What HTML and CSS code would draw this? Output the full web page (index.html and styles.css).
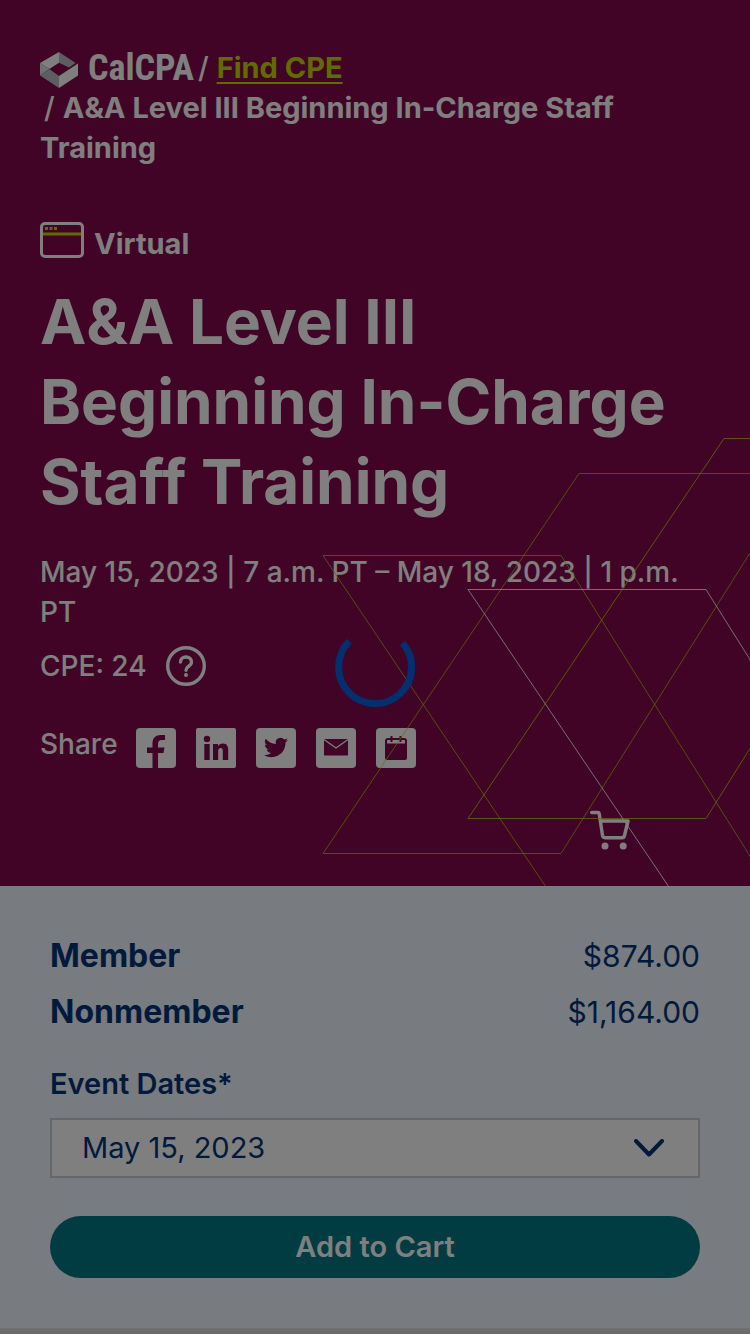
FILE: index.html
```html
<!DOCTYPE html>
<html lang="en">
<head>
<meta charset="utf-8">
<meta name="viewport" content="width=device-width, initial-scale=1">
<title>A&amp;A Level III Beginning In-Charge Staff Training | CalCPA</title>
<link rel="stylesheet" href="styles.css">
</head>
<body>
<main class="page">
  <header class="hero">
    <nav class="breadcrumb" aria-label="Breadcrumb">
      <div class="crumb-line">
        <a class="logo" href="#" aria-label="CalCPA home">
          <svg class="logo-mark" viewBox="0 0 38 36" aria-hidden="true">
            <path fill="#fff" d="M19 0v10.700L9.300 17 0 11z"/>
            <path fill="#b8bcc2" d="M19 0 35.500 11 29 15.500l-10-4.800z"/>
            <path fill="#e0e1e4" d="M0 11l9.300 6L0 23.500z"/>
            <path fill="#b8bcc2" d="M0 23.500 9.300 17 19 24v12z"/>
            <path fill="#fff" d="M38 11.500v12L19 36V24z"/>
          </svg>
          <span class="logo-name">CalCPA</span>
        </a>
        <span class="slash">/</span>
        <a class="crumb-link" href="#">Find CPE</a>
      </div>
      <div class="crumb-current"><span class="slash">/</span>A&amp;A Level III Beginning In-Charge Staff Training</div>
    </nav>

    <div class="format">
      <svg class="format-icon" viewBox="0 0 44 36" fill="none" aria-hidden="true">
        <path stroke="#c4d600" stroke-width="3" d="M2 12h40"/>
        <rect x="1.500" y="1.500" width="41" height="33" rx="3.500" stroke="#fff" stroke-width="3"/>
        <path fill="#c4d600" d="M5 5h3v3H5zM9.500 5h3v3h-3zM14 5h3v3h-3z"/>
      </svg>
      <span>Virtual</span>
    </div>

    <h1 class="title">A&amp;A Level III Beginning In-Charge Staff Training</h1>
    <p class="when">May 15, 2023 | 7 a.m. PT – May 18, 2023 | 1 p.m. PT</p>
    <div class="credits">
      <span>CPE: 24</span>
      <button class="icon-button" type="button" aria-label="About CPE credits">
        <svg viewBox="0 0 40 40" fill="none" stroke="#fff" stroke-width="3.400" aria-hidden="true">
          <circle cx="20" cy="20" r="18.300"/>
          <path stroke-linecap="round" d="M14.500 16c0-3.400 2.300-5 5.500-5s5.500 2 5.500 5c0 4.500-5.500 4-5.500 8.200"/>
          <circle cx="20" cy="29" r="2" fill="#fff" stroke="none"/>
        </svg>
      </button>
    </div>

    <div class="share">
      <span class="share-label">Share</span>
      <a class="share-link" href="#" aria-label="Facebook">
        <svg viewBox="0 0 40 40" aria-hidden="true"><rect width="40" height="40" rx="4" fill="#fff"/><path fill="#82084e" d="M16.500 40V25H11v-5.500h5.500v-4C16.500 10 19.500 7 25 7h4v5h-3c-3 0-4 1.500-4 4v3.500h6.500L27.500 25H22v15z"/></svg>
      </a>
      <a class="share-link" href="#" aria-label="LinkedIn">
        <svg viewBox="0 0 40 40" aria-hidden="true"><rect width="40" height="40" rx="2" fill="#fff"/><g fill="#82084e"><circle cx="11" cy="11" r="3.200"/><path d="M8.300 16h5.400v16H8.300zM17 16h5v2.200c1-1.700 2.700-2.600 4.800-2.600 4.200 0 5.400 2.800 5.400 7V32h-5.400v-8.500c0-2-.5-3.400-2.200-3.400-1.800 0-2.400 1.400-2.400 3.400V32H17z"/></g></svg>
      </a>
      <a class="share-link" href="#" aria-label="Twitter">
        <svg viewBox="0 0 40 40" aria-hidden="true"><rect width="40" height="40" rx="4" fill="#fff"/><path fill="#82084e" transform="translate(8 7.500)" d="M24 4.600c-.9.400-1.800.7-2.800.8 1-.6 1.800-1.600 2.200-2.700-1 .6-2 1-3.100 1.200A4.900 4.900 0 0 0 11.900 8.400C7.800 8.200 4.100 6.200 1.700 3.200a4.900 4.900 0 0 0 1.500 6.500c-.8 0-1.600-.2-2.200-.6v.1c0 2.300 1.700 4.300 3.900 4.800-.7.200-1.500.2-2.200.1.600 2 2.400 3.400 4.600 3.400A9.900 9.900 0 0 1 0 19.500 13.900 13.900 0 0 0 7.500 21.700c9.100 0 14.300-7.700 14-14.600 1-.7 1.800-1.600 2.500-2.500z"/></svg>
      </a>
      <a class="share-link" href="#" aria-label="Email">
        <svg viewBox="0 0 40 40" fill="none" aria-hidden="true"><rect width="40" height="40" rx="4" fill="#fff"/><path fill="#82084e" d="M8 11h24v16.500H8z"/><path stroke="#fff" stroke-width="1.200" d="m8 11.500 12 8.500 12-8.500"/></svg>
      </a>
      <a class="share-link" href="#" aria-label="Add to calendar">
        <svg viewBox="0 0 40 40" fill="none" aria-hidden="true"><rect width="40" height="40" rx="4" fill="#fff"/><path fill="#82084e" d="M9 15.500h22V30a2 2 0 0 1-2 2H11a2 2 0 0 1-2-2z"/><path stroke="#82084e" stroke-width="2" d="M10 16v-3a2 2 0 0 1 2-2h1m5 0h4m5 0h1a2 2 0 0 1 2 2v3M15.500 8v6M24.500 8v6M13 11h5m4 0h5"/></svg>
      </a>
    </div>

    <div class="cart-row">
      <button class="icon-button" type="button" aria-label="Shopping cart">
        <svg viewBox="0 0 40 40" fill="none" stroke="#fff" stroke-width="3.400" stroke-linejoin="round" stroke-linecap="round" aria-hidden="true">
          <path d="M1.700 2.500H8q1 0 1.200 1l3.300 22q.4 2.200 2.500 2.200h17q2 0 2.500-2.200l3.500-14.500H10.500"/>
          <g fill="#fff" stroke="none"><circle cx="15" cy="36" r="3.500"/><circle cx="33.200" cy="36" r="3.500"/></g>
        </svg>
      </button>
    </div>

    <svg class="hero-lines" viewBox="322 438 428 448" fill="none" stroke="#c4d600" aria-hidden="true">
      <path stroke-opacity=".8" d="M760 438.500H724L468 818.500H706L760 732.500"/>
      <path stroke-opacity=".7" d="M760 473.500H579L323 853.500H561L760 537M546 887 323 555.500H561L760 872"/>
      <path stroke="#fff" stroke-opacity=".85" d="M669 887 468 589.500H706L760 675.500"/>
    </svg>
  </header>

  <section class="purchase" aria-label="Pricing">
    <dl class="prices">
      <div class="price"><dt>Member</dt><dd>$874.00</dd></div>
      <div class="price"><dt>Nonmember</dt><dd>$1,164.00</dd></div>
    </dl>
    <form class="order">
      <label class="order-label" for="event-date">Event Dates*</label>
      <div class="select-box">
        <select id="event-date" class="select"><option>May 15, 2023</option></select>
        <svg class="chevron" viewBox="0 0 30 18" fill="none" stroke="#003478" stroke-width="4" stroke-linecap="round" stroke-linejoin="round" aria-hidden="true"><path d="m2 2 13 13.500L28 2"/></svg>
      </div>
      <button class="submit" type="button">Add to Cart</button>
    </form>
  </section>
  <div class="next-section"></div>
</main>

<div class="overlay" role="status" aria-label="Loading">
  <svg class="spinner" viewBox="0 0 80 80" fill="none" stroke="#003070" stroke-width="7" aria-hidden="true"><path d="M14.300 14.300A36.500 36.500 0 1 0 67.500 16"/></svg>
</div>
</body>
</html>
```
FILE: styles.css
```css
*, *::before, *::after { box-sizing: border-box; }

body {
  margin: 0;
  font-family: Inter, "Liberation Sans", sans-serif;
  font-size: 29px;
  line-height: 40px;
  color: #003478;
}

a { color: inherit; }

button { font: inherit; cursor: pointer; }

.page {
  min-height: 100vh;
  display: flex;
  flex-direction: column;
}

.hero {
  position: relative;
  padding: 48px 40px 36px;
  background: #82084e;
  color: #fff;
}

.breadcrumb { font-weight: 700; }

.crumb-line {
  display: flex;
  align-items: center;
}

.logo {
  display: flex;
  align-items: center;
  gap: 10px;
  text-decoration: none;
}

.logo-mark {
  width: 38px;
  height: 36px;
  margin-top: 4px;
}

.logo-name {
  font-family: "Roboto Condensed", Roboto, "Liberation Sans", sans-serif;
  font-size: 36px;
}

.slash { padding: 0 8px 0 4px; font-weight: 500; }

.crumb-link {
  color: #c4d600;
  text-underline-offset: 4px;
}

.format {
  display: flex;
  align-items: flex-start;
  gap: 10px;
  margin-top: 54px;
  font-weight: 700;
  line-height: 44px;
}

.format-icon { width: 44px; height: 36px; }

.title {
  margin: 16px 0 30px;
  font-size: 62px;
  line-height: 80px;
  font-weight: 700;
}

.when,
.credits,
.share {
  font-size: 28px;
  font-weight: 500;
}

.when { margin: 0; }

.credits {
  display: flex;
  align-items: center;
  gap: 19px;
  margin-top: 14px;
}

.icon-button {
  width: 40px;
  height: 40px;
  padding: 0;
  border: 0;
  background: none;
}

.icon-button svg,
.share-link svg { display: block; width: 100%; height: 100%; }

.share {
  display: flex;
  align-items: flex-start;
  gap: 20px;
  margin-top: 42px;
  line-height: 32px;
}

.share-label { margin-right: -2px; }

.share-link { width: 40px; height: 40px; }

.cart-row {
  display: flex;
  justify-content: flex-end;
  margin-top: 42px;
  padding-right: 80px;
}

.hero-lines {
  position: absolute;
  right: 0;
  bottom: 0;
  width: 428px;
  height: 448px;
  pointer-events: none;
}

.purchase {
  flex: 1;
  padding: 42px 50px 50px;
  background: #f0f6fe;
}

.prices { margin: 0; }

.price {
  display: flex;
  justify-content: space-between;
  padding: 8px 0;
}

.price dt { font-size: 32px; font-weight: 700; }
.price dd { margin: 0; font-size: 30px; }

.order {
  display: flex;
  flex-direction: column;
  margin-top: 24px;
}

.order-label { font-weight: 600; }

.select-box {
  display: grid;
  align-items: center;
  margin: 14px 0 38px;
}

.select {
  grid-area: 1 / 1;
  width: 100%;
  height: 60px;
  padding: 0 80px 0 30px;
  border: 2px solid #ccc;
  border-radius: 0;
  background: #fff;
  color: inherit;
  font: inherit;
  appearance: none;
}

.chevron {
  grid-area: 1 / 1;
  justify-self: end;
  width: 30px;
  height: 18px;
  margin-right: 36px;
  pointer-events: none;
}

.submit {
  padding: 11px 30px;
  border: 0;
  border-radius: 31px;
  background: #007884;
  color: #fff;
  font-weight: 600;
}

.next-section {
  height: 6px;
  background: linear-gradient(#e0e2e6, #d0d2d6);
}

.overlay {
  position: fixed;
  inset: 0;
  display: grid;
  place-items: center;
  background: rgba(0, 0, 0, 0.5);
}

.spinner { width: 80px; height: 80px; }
```
